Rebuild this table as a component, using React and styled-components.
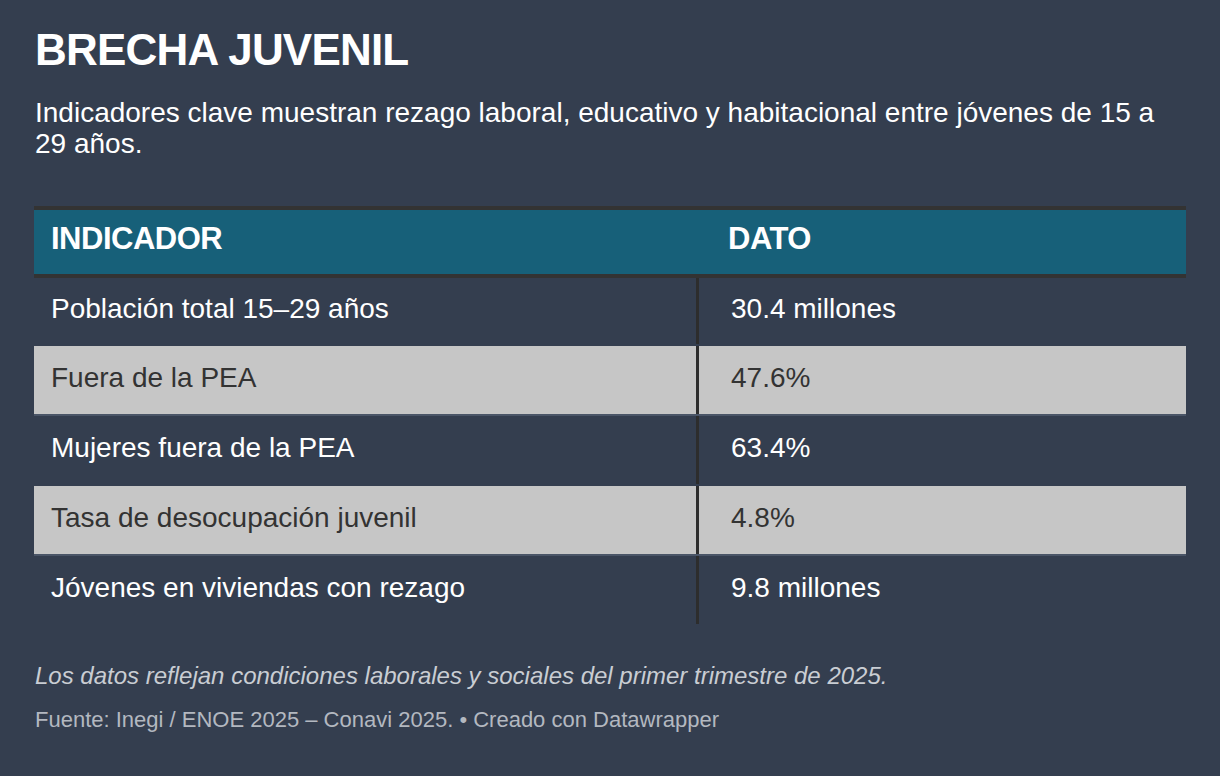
import React from 'react';
import styled, { createGlobalStyle } from 'styled-components';

const rows = [
  { label: 'Población total 15–29 años', value: '30.4 millones' },
  { label: 'Fuera de la PEA', value: '47.6%' },
  { label: 'Mujeres fuera de la PEA', value: '63.4%' },
  { label: 'Tasa de desocupación juvenil', value: '4.8%' },
  { label: 'Jóvenes en viviendas con rezago', value: '9.8 millones' },
];

function App() {
  return (
    <Page>
      <GlobalStyle />
      <Title>BRECHA JUVENIL</Title>
      <Subtitle>
        Indicadores clave muestran rezago laboral, educativo y habitacional entre jóvenes de 15 a 29 años.
      </Subtitle>
      <Table>
        <HeadRow>
          <HeadCell>INDICADOR</HeadCell>
          <HeadCell $second>DATO</HeadCell>
        </HeadRow>
        {rows.map((r, i) => (
          <Row key={r.label} $shaded={i % 2 === 1} $first={i === 0}>
            <Cell>{r.label}</Cell>
            <Cell $value>{r.value}</Cell>
          </Row>
        ))}
      </Table>
      <Note>Los datos reflejan condiciones laborales y sociales del primer trimestre de 2025.</Note>
      <Source>Fuente: Inegi / ENOE 2025 – Conavi 2025. • Creado con Datawrapper</Source>
    </Page>
  );
}

const GlobalStyle = createGlobalStyle`
  html, body {
    margin: 0;
    padding: 0;
    background: #343e4f;
  }
  body {
    font-family: "Liberation Sans", Arial, Helvetica, sans-serif;
  }
`;

const Page = styled.div`
  width: 1220px;
  height: 776px;
  box-sizing: border-box;
  padding: 28px 34px 0;
  background: #343e4f;
  color: #fff;
  overflow: hidden;
`;

const Title = styled.h1`
  margin: 0 0 0 1px;
  font-size: 44px;
  line-height: 44px;
  font-weight: 700;
  letter-spacing: -0.8px;
  color: #fff;
`;

const Subtitle = styled.p`
  margin: 25px 0 0 1px;
  font-size: 28px;
  line-height: 31px;
  color: #fff;
`;

const Table = styled.div`
  margin-top: 47px;
  width: 1152px;
`;

const HeadRow = styled.div`
  display: grid;
  grid-template-columns: 662px 1fr;
  height: 64px;
  background: #176079;
  border-top: 4px solid #333333;
  border-bottom: 4px solid #333333;
`;

const HeadCell = styled.div`
  display: flex;
  align-items: center;
  padding: 0 0 6px ${(p) => (p.$second ? '32px' : '17px')};
  font-size: 31px;
  font-weight: 700;
  letter-spacing: -0.5px;
  color: #fff;
`;

const Row = styled.div`
  display: grid;
  grid-template-columns: 662px 1fr;
  box-sizing: border-box;
  height: ${(p) => (p.$first ? '68px' : '70px')};
  background: ${(p) => (p.$shaded ? '#c6c6c6' : 'transparent')};
  border-bottom: 2px solid ${(p) => (p.$shaded ? '#4a5567' : 'transparent')};
  color: ${(p) => (p.$shaded ? '#333333' : '#ffffff')};
`;

const Cell = styled.div`
  display: flex;
  align-items: center;
  padding: 0 0 5px ${(p) => (p.$value ? '32px' : '17px')};
  font-size: 28px;
  border-left: ${(p) => (p.$value ? '3px solid #2d2d2d' : 'none')};
`;

const Note = styled.p`
  margin: 35px 0 0 1px;
  font-size: 24px;
  line-height: 30px;
  font-style: italic;
  color: #c9cdd3;
`;

const Source = styled.p`
  margin: 14px 0 0 1px;
  font-size: 22px;
  line-height: 30px;
  color: #b3b8c0;
`;

export default App;
